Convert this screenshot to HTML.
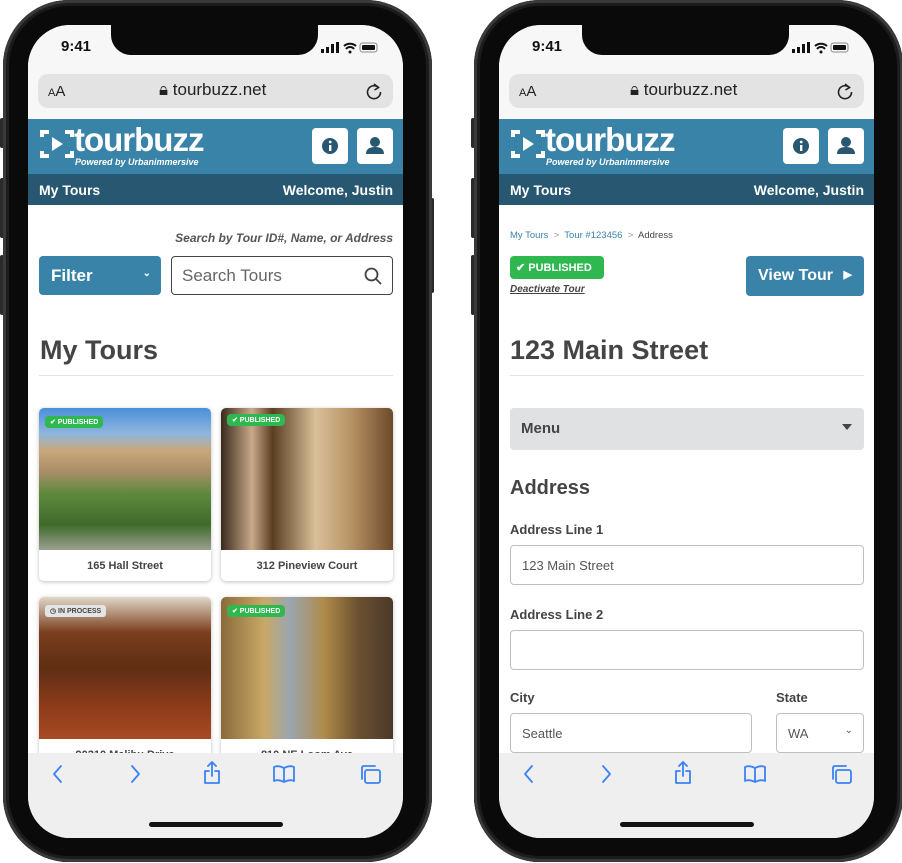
<!DOCTYPE html>
<html><head><meta charset="utf-8"><style>
*{box-sizing:border-box;margin:0;padding:0}
body{width:902px;height:863px;background:#fff;position:relative;overflow:hidden;font-family:"Liberation Sans",sans-serif}
.phone{position:absolute;top:0;width:429px;height:862px;border-radius:66px;background:#0a0a0a;box-shadow:inset 0 0 0 3px #3a3a3a,inset 0 0 0 6px #1c1c1c}
.btn{position:absolute;background:#2a2a2a;width:4px;border-radius:2px}
.screen{position:absolute;left:25px;top:25px;width:375px;height:813px;border-radius:42px;overflow:hidden;background:#fff}
.a{position:absolute}
.status{left:0;top:0;width:375px;height:94px;background:#f7f7f7}
.notch{left:83px;top:0;width:207px;height:30px;background:#0a0a0a;border-radius:0 0 20px 20px}
.time{left:33px;top:13px;font-size:15px;font-weight:bold;color:#111}
.url{left:10px;top:49px;width:355px;height:34px;background:#e3e3e3;border-radius:10px;font-size:17px;color:#222}
.hdr{left:0;top:94px;width:375px;height:55px;background:#3983a9}
.sub{left:0;top:149px;width:375px;height:31px;background:#275771;color:#fff;font-weight:bold;font-size:14px}
.sqb{top:103px;width:36px;height:36px;background:#fff;border-radius:4px}
.tool{left:0;top:728px;width:375px;height:85px;background:#efefef}
.home{left:121px;top:797px;width:134px;height:5px;background:#111;border-radius:3px}
.card{background:#fff;border-radius:5px;box-shadow:0 1px 4px rgba(0,0,0,.25);overflow:hidden}
.card .img{height:142px}
.card .lbl{text-align:center;font-size:11px;font-weight:bold;color:#444;padding-top:10px}
.pub{background:#2fb84f;color:#fff;font-weight:bold;border-radius:4px}
.h1{font-size:27px;font-weight:bold;color:#444}
.hr{height:1px;background:#e2e2e2}
.lab{font-size:13px;font-weight:bold;color:#444}
.inp{border:1px solid #bfbfbf;border-radius:4px;height:40px;font-size:13px;color:#555;padding:12px 11px}
</style></head><body>

<!-- LEFT PHONE -->
<div class="btn" style="left:0;top:118px;height:30px"></div>
<div class="btn" style="left:0;top:178px;height:60px"></div>
<div class="btn" style="left:0;top:255px;height:60px"></div>
<div class="btn" style="left:430px;top:198px;height:95px"></div>
<div class="phone" style="left:3px">
<div class="screen">
 <div class="a status"></div>
 <div class="a notch"></div>
 <div class="a time">9:41</div>
 <svg class="a" style="left:290px;top:16px" width="60" height="14"><rect x="3" y="8" width="3" height="4" fill="#111"/><rect x="8" y="6" width="3" height="6" fill="#111"/><rect x="13" y="3" width="3" height="9" fill="#111"/><rect x="18" y="1" width="3" height="11" fill="#111"/><path d="M26 5a9 9 0 0 1 12 0M28 8a5 5 0 0 1 8 0" stroke="#111" stroke-width="2" fill="none"/><circle cx="32" cy="11" r="1.5" fill="#111"/><rect x="42" y="2" width="17" height="9" rx="2.5" fill="none" stroke="#888"/><rect x="44" y="4" width="13" height="5" rx="1" fill="#111"/></svg>
 <div class="a url"><span class="a" style="left:10px;top:9px;font-size:11px">A<span style="font-size:15px">A</span></span><span class="a" style="left:121px;top:6px">&#128274;&#xFE0E; tourbuzz.net</span><svg class="a" style="left:327px;top:8px" width="18" height="18"><path d="M13.5 5.5A6.5 6.5 0 1 0 15.5 10" stroke="#222" stroke-width="1.6" fill="none"/><path d="M9 2l4.5 3.5L9.5 8" stroke="#222" stroke-width="1.6" fill="none"/></svg></div>
 <div class="a hdr">
  <svg class="a" style="left:11px;top:9px" width="36" height="32"><path d="M3 9V4h7M26 4h7v5M33 23v5h-7M10 28H3v-5" stroke="#fff" stroke-width="4" fill="none"/><path d="M13 9l11 7-11 7z" fill="#fff"/></svg>
  <span class="a" style="left:46px;top:2px;font-size:33px;font-weight:bold;color:#fff;letter-spacing:-1px">tourbuzz</span>
  <span class="a" style="left:47px;top:38px;font-size:9px;font-style:italic;font-weight:bold;color:#fff">Powered by Urbanimmersive</span>
 </div>
 <div class="a sqb" style="left:284px"><svg width="36" height="36"><circle cx="18" cy="18" r="8" fill="#275771"/><rect x="17" y="17" width="2.4" height="6" fill="#fff"/><circle cx="18.2" cy="14" r="1.4" fill="#fff"/></svg></div>
 <div class="a sqb" style="left:329px"><svg width="36" height="36"><circle cx="18" cy="14" r="5" fill="#275771"/><path d="M9 26q0-7 9-7t9 7z" fill="#275771"/></svg></div>
 <div class="a sub"><span class="a" style="left:11px;top:8px">My Tours</span><span class="a" style="right:10px;top:8px;white-space:nowrap">Welcome, Justin</span></div>

 <div class="a" style="right:10px;top:206px;font-size:12px;font-style:italic;font-weight:bold;color:#555">Search by Tour ID#, Name, or Address</div>
 <div class="a" style="left:11px;top:231px;width:122px;height:39px;background:#3983a9;border-radius:4px;color:#fff;font-size:17px;font-weight:bold;padding:10px 12px">Filter<span class="a" style="right:10px;top:12px;font-size:10px">&#8964;</span></div>
 <div class="a" style="left:143px;top:231px;width:222px;height:39px;border:1px solid #444;border-radius:4px;color:#666;font-size:17px;padding:9px 10px">Search Tours<svg class="a" style="right:10px;top:10px" width="18" height="18"><circle cx="7.5" cy="7.5" r="6" stroke="#444" stroke-width="1.8" fill="none"/><path d="M12 12l5 5" stroke="#444" stroke-width="1.8"/></svg></div>
 <div class="a h1" style="left:12px;top:310px">My Tours</div>
 <div class="a hr" style="left:11px;top:350px;width:354px"></div>

 <div class="a card" style="left:11px;top:383px;width:172px;height:173px"><div class="img" style="background:linear-gradient(180deg,#4a8fd8 0%,#8fb6de 18%,#c9a77a 30%,#a88d68 45%,#5f8a3d 60%,#3f6a2a 82%,#9aa08f 100%)"></div><div class="lbl">165 Hall Street</div></div>
 <div class="a pub" style="left:17px;top:391px;font-size:7px;padding:2px 5px">&#10004; PUBLISHED</div>
 <div class="a card" style="left:193px;top:383px;width:172px;height:173px"><div class="img" style="background:linear-gradient(90deg,#3a2a1c 0%,#c8a98a 18%,#5a3e22 30%,#d9c09a 55%,#b89465 75%,#6d4a2b 100%)"></div><div class="lbl">312 Pineview Court</div></div>
 <div class="a pub" style="left:199px;top:389px;font-size:7px;padding:2px 5px">&#10004; PUBLISHED</div>
 <div class="a card" style="left:11px;top:572px;width:172px;height:173px"><div class="img" style="background:linear-gradient(180deg,#e0d7c8 0%,#7a3e1c 25%,#5e2e14 50%,#8a3a1a 75%,#a94a23 100%)"></div><div class="lbl">90210 Malibu Drive</div></div>
 <div class="a" style="left:17px;top:580px;font-size:7px;padding:2px 5px;background:#e4e4e4;color:#444;font-weight:bold;border-radius:3px">&#9719; IN PROCESS</div>
 <div class="a card" style="left:193px;top:572px;width:172px;height:173px"><div class="img" style="background:linear-gradient(90deg,#8a6a3a 0%,#c9a866 25%,#9aa6b0 40%,#b08a4a 60%,#6a5030 80%,#4a3a2a 100%)"></div><div class="lbl">810 NE Loom Ave</div></div>
 <div class="a pub" style="left:199px;top:580px;font-size:7px;padding:2px 5px">&#10004; PUBLISHED</div>

 <div class="a tool"><svg width="375" height="85"><g stroke="#3a82f6" stroke-width="1.8" fill="none" stroke-linecap="round" stroke-linejoin="round"><path d="M33 13l-7 8 7 8"/><path d="M104 13l7 8-7 8"/><path d="M181 18h-4v12h14V18h-4M184 9v14M180 13l4-4 4 4"/><path d="M256 15q-6-3-10-1v14q4-2 10 1q6-3 10-1V14q-4-2-10 1zM256 15v14"/><rect x="337" y="17" width="15" height="13" rx="2"/><path d="M334 26v-11q0-2 2-2h11"/></g></svg></div>
 <div class="a home"></div>
</div></div>

<!-- RIGHT PHONE -->
<div class="btn" style="left:471px;top:118px;height:30px"></div>
<div class="btn" style="left:471px;top:178px;height:60px"></div>
<div class="btn" style="left:471px;top:255px;height:60px"></div>
<div class="btn" style="left:901px;top:198px;height:95px"></div>
<div class="phone" style="left:474px">
<div class="screen">
 <div class="a status"></div>
 <div class="a notch"></div>
 <div class="a time">9:41</div>
 <svg class="a" style="left:290px;top:16px" width="60" height="14"><rect x="3" y="8" width="3" height="4" fill="#111"/><rect x="8" y="6" width="3" height="6" fill="#111"/><rect x="13" y="3" width="3" height="9" fill="#111"/><rect x="18" y="1" width="3" height="11" fill="#111"/><path d="M26 5a9 9 0 0 1 12 0M28 8a5 5 0 0 1 8 0" stroke="#111" stroke-width="2" fill="none"/><circle cx="32" cy="11" r="1.5" fill="#111"/><rect x="42" y="2" width="17" height="9" rx="2.5" fill="none" stroke="#888"/><rect x="44" y="4" width="13" height="5" rx="1" fill="#111"/></svg>
 <div class="a url"><span class="a" style="left:10px;top:9px;font-size:11px">A<span style="font-size:15px">A</span></span><span class="a" style="left:121px;top:6px">&#128274;&#xFE0E; tourbuzz.net</span><svg class="a" style="left:327px;top:8px" width="18" height="18"><path d="M13.5 5.5A6.5 6.5 0 1 0 15.5 10" stroke="#222" stroke-width="1.6" fill="none"/><path d="M9 2l4.5 3.5L9.5 8" stroke="#222" stroke-width="1.6" fill="none"/></svg></div>
 <div class="a hdr">
  <svg class="a" style="left:11px;top:9px" width="36" height="32"><path d="M3 9V4h7M26 4h7v5M33 23v5h-7M10 28H3v-5" stroke="#fff" stroke-width="4" fill="none"/><path d="M13 9l11 7-11 7z" fill="#fff"/></svg>
  <span class="a" style="left:46px;top:2px;font-size:33px;font-weight:bold;color:#fff;letter-spacing:-1px">tourbuzz</span>
  <span class="a" style="left:47px;top:38px;font-size:9px;font-style:italic;font-weight:bold;color:#fff">Powered by Urbanimmersive</span>
 </div>
 <div class="a sqb" style="left:284px"><svg width="36" height="36"><circle cx="18" cy="18" r="8" fill="#275771"/><rect x="17" y="17" width="2.4" height="6" fill="#fff"/><circle cx="18.2" cy="14" r="1.4" fill="#fff"/></svg></div>
 <div class="a sqb" style="left:329px"><svg width="36" height="36"><circle cx="18" cy="14" r="5" fill="#275771"/><path d="M9 26q0-7 9-7t9 7z" fill="#275771"/></svg></div>
 <div class="a sub"><span class="a" style="left:11px;top:8px">My Tours</span><span class="a" style="right:10px;top:8px;white-space:nowrap">Welcome, Justin</span></div>

 <div class="a" style="left:11px;top:205px;font-size:9.5px;color:#3983a9">My Tours <span style="color:#999">&nbsp;&gt;&nbsp;</span> Tour #123456 <span style="color:#999">&nbsp;&gt;&nbsp;</span> <span style="color:#444">Address</span></div>
 <div class="a pub" style="left:11px;top:231px;width:94px;height:23px;font-size:11px;padding:5px 6px">&#10004; PUBLISHED</div>
 <div class="a" style="left:11px;top:259px;font-size:10px;font-style:italic;font-weight:bold;color:#444;text-decoration:underline">Deactivate Tour</div>
 <div class="a" style="left:247px;top:231px;width:118px;height:40px;background:#3983a9;border-radius:4px;color:#fff;font-size:16px;font-weight:bold;padding:11px 12px">View Tour<span class="a" style="right:12px;top:12px;font-size:11px">&#9654;</span></div>
 <div class="a h1" style="left:11px;top:310px">123 Main Street</div>
 <div class="a hr" style="left:11px;top:350px;width:354px"></div>
 <div class="a" style="left:11px;top:383px;width:354px;height:42px;background:#e0e1e3;border-radius:4px;font-size:15px;font-weight:bold;color:#444;padding:12px 11px">Menu<span class="a" style="right:12px;top:16px;width:0;height:0;border:5px solid transparent;border-top:6px solid #444"></span></div>
 <div class="a" style="left:11px;top:452px;font-size:20px;font-weight:bold;color:#444">Address</div>
 <div class="a lab" style="left:11px;top:497px">Address Line 1</div>
 <div class="a inp" style="left:11px;top:520px;width:354px">123 Main Street</div>
 <div class="a lab" style="left:11px;top:582px">Address Line 2</div>
 <div class="a inp" style="left:11px;top:605px;width:354px"></div>
 <div class="a lab" style="left:11px;top:665px">City</div>
 <div class="a inp" style="left:11px;top:688px;width:242px">Seattle</div>
 <div class="a lab" style="left:277px;top:665px">State</div>
 <div class="a inp" style="left:277px;top:688px;width:88px">WA<span class="a" style="right:10px;top:11px;font-size:10px">&#8964;</span></div>

 <div class="a tool"><svg width="375" height="85"><g stroke="#3a82f6" stroke-width="1.8" fill="none" stroke-linecap="round" stroke-linejoin="round"><path d="M33 13l-7 8 7 8"/><path d="M104 13l7 8-7 8"/><path d="M181 18h-4v12h14V18h-4M184 9v14M180 13l4-4 4 4"/><path d="M256 15q-6-3-10-1v14q4-2 10 1q6-3 10-1V14q-4-2-10 1zM256 15v14"/><rect x="337" y="17" width="15" height="13" rx="2"/><path d="M334 26v-11q0-2 2-2h11"/></g></svg></div>
 <div class="a home"></div>
</div></div>
</body></html>
